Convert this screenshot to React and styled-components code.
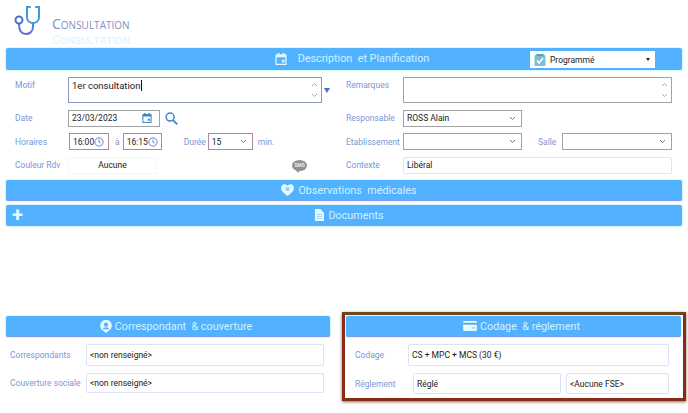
import React from "react";
import styled, { createGlobalStyle } from "styled-components";

const GlobalStyle = createGlobalStyle`
  html, body {
    margin: 0;
    padding: 0;
    background: #fff;
    font-family: Roboto, "Open Sans", sans-serif;
  }
`;

const Page = styled.div`
  width: 688px;
  height: 413px;
  overflow: hidden;
  box-sizing: border-box;
  padding: 0 6px;
  display: flex;
  flex-direction: column;
`;

const Header = styled.header`
  height: 48px;
  flex: none;
  display: flex;
  align-items: flex-start;
  gap: 10px;
  padding: 5px 0 0 8px;
  box-sizing: border-box;
`;

const TitleStack = styled.div`
  display: flex;
  flex-direction: column;
  padding-top: 9px;
`;

const Title = styled.h1`
  margin: 0;
  font-family: ${(p) => (p.$ghost ? "Roboto" : '"Open Sans"')}, sans-serif;
  font-size: ${(p) => (p.$ghost ? 12.3 : 14)}px;
  line-height: normal;
  font-weight: 400;
  font-variant: small-caps;
  color: ${(p) => (p.$ghost ? "#dff4ff" : "#7f8fc4")};
`;

const Bar = styled.div`
  position: relative;
  height: ${(p) => p.$h || 21}px;
  flex: none;
  box-sizing: border-box;
  padding-left: ${(p) => p.$pl ?? 16}px;
  background: #52b2ff;
  border-radius: 2px;
  border-bottom: 1px solid #7d9df2;
  box-shadow: 0 0 0 1px #d8f8ff;
  display: flex;
  align-items: center;
  justify-content: center;
  gap: ${(p) => p.$gap || 4}px;
  color: #cdf3ff;
  font-size: 10.8px;
  white-space: pre;
`;

const StatusSelect = styled.div`
  position: absolute;
  left: 524px;
  top: 3px;
  width: 125px;
  height: 17px;
  box-sizing: border-box;
  background: #fff;
  color: #222;
  font-size: 8.5px;
  display: flex;
  align-items: center;
  padding: 0 5px 0 4px;
  gap: 4px;
`;

const Caret = styled.span`
  margin-left: auto;
  border: 2px solid transparent;
  border-top: 3px solid #222;
  border-bottom: 0;
`;

const PlusIcon = styled.span`
  position: absolute;
  left: 6px;
  top: 0;
  font-size: 20px;
  line-height: 20px;
  font-weight: 700;
  color: #e6fbff;
`;

const FormGrid = styled.div`
  display: grid;
  grid-template-columns: 331px 1fr;
  grid-template-rows: 26px 17px 17px 17px;
  row-gap: 6.5px;
  padding: 7px 10px 0 9px;
  height: 110px;
  flex: none;
  box-sizing: border-box;
`;

const Row = styled.div`
  display: flex;
  align-items: ${(p) => (p.$top ? "flex-start" : "center")};
  min-width: 0;
`;

const Label = styled.label`
  width: ${(p) => p.$w || 53}px;
  flex: none;
  font-size: 8.5px;
  line-height: 12px;
  color: #7a98d4;
  margin-left: ${(p) => p.$ml || 0}px;
  padding-top: ${(p) => (p.$top ? 2 : 0)}px;
  white-space: nowrap;
`;

const Inline = styled.span`
  display: flex;
  font-size: 8.5px;
  color: #7a98d4;
  margin: 0 ${(p) => p.$mr ?? 6}px 0 ${(p) => p.$ml ?? 6}px;
`;

const Field = styled.div`
  box-sizing: border-box;
  width: ${(p) => (p.$w ? `${p.$w}px` : "auto")};
  flex: ${(p) => (p.$w ? "none" : 1)};
  height: 100%;
  margin-left: ${(p) => p.$ml || 0}px;
  background: #fff;
  border: 1px solid ${(p) => p.$border || "#a2a2a2"};
  color: #222;
  font-size: 8.5px;
  display: flex;
  align-items: center;
  padding: 0 3px;
  white-space: nowrap;
`;

const TextArea = styled(Field)`
  align-items: flex-start;
  padding: 2px 3px;
  font-size: 9.500px;
  line-height: 12px;
  position: relative;
`;

const Cursor = styled.span`
  border-left: 1px solid #111;
  height: 11px;
  margin-left: 1px;
`;

const Arrows = styled.span`
  position: absolute;
  right: 3px;
  top: 4px;
  bottom: 4px;
  display: flex;
  flex-direction: column;
  justify-content: space-between;
`;

const Chevron = ({ up, color = "#777" }) => (
  <svg width="7" height="5" viewBox="0 0 7 5" fill="none" stroke={color} strokeWidth="1">
    <path d={up ? "M1 4l2.500-2.500L6 4" : "M1 1l2.500 2.500L6 1"} />
  </svg>
);

const ChevronSlot = styled.span`
  margin-left: auto;
  display: flex;
  padding-right: ${(p) => p.$pr ?? 2}px;
`;

const SelectField = ({ w, border, ml, children }) => (
  <Field $w={w} $border={border} $ml={ml}>
    {children}
    <ChevronSlot>
      <Chevron />
    </ChevronSlot>
  </Field>
);

const ScrollArrows = () => (
  <Arrows>
    <Chevron up color="#aaa" />
    <Chevron color="#aaa" />
  </Arrows>
);

const MoreArrow = styled.span`
  margin-left: 2px;
  align-self: center;
  border: 3.500px solid transparent;
  border-top: 5px solid #4a6fc4;
  border-bottom: 0;
`;

const ColorBox = styled.div`
  width: 89px;
  height: 100%;
  box-sizing: border-box;
  border: 1px solid #f4f6fb;
  display: flex;
  align-items: center;
  justify-content: center;
  font-size: 8.5px;
  color: #222;
`;

const SmsBadge = styled.span`
  position: relative;
  margin-left: auto;
  margin-right: 39px;
  width: 15px;
  height: 11px;
  border-radius: 50%;
  background: #909090;
  color: #eee;
  font-size: 5px;
  font-weight: 700;
  display: flex;
  align-items: center;
  justify-content: center;
  &::after {
    content: "";
    position: absolute;
    left: 4px;
    bottom: -2px;
    border: 2px solid transparent;
    border-top: 3px solid #909090;
    border-bottom: 0;
  }
`;

const ContextField = styled(Field)`
  border-color: #dfe5f6;
  border-radius: 2px;
`;

const Bars = styled.div`
  display: flex;
  flex-direction: column;
  gap: 4px;
`;

const Bottom = styled.div`
  margin-top: auto;
  display: grid;
  grid-template-columns: 324px 1fr;
  column-gap: 12px;
  height: 97px;
  flex: none;
`;

const Panel = styled.section`
  display: flex;
  flex-direction: column;
  box-sizing: border-box;
  ${(p) =>
    p.$selected
      ? `
    height: 89px;
    margin: -4px -4px 0 0;
    padding: 1px 2px 0 1px;
    border: 3px solid #8a2a17;
    border-top-color: #6e4a1a;
    box-shadow: 0 1px 3px rgba(60, 50, 20, 0.7);
    overflow: hidden;
  `
      : "height: 80px;"}
`;

const PanelBody = styled.div`
  display: flex;
  flex-direction: column;
  gap: 7px;
  padding: ${(p) => (p.$selected ? "7px 12px 0 9px" : "7px 6px 0 4px")};
`;

const PanelRow = styled.div`
  display: flex;
  align-items: center;
  height: ${(p) => p.$h}px;
  flex: none;
  gap: ${(p) => p.$gap || 0}px;
`;

const RoundField = styled(Field)`
  border: 1px solid #dde3f6;
  border-radius: 2px;
  padding: 0 3px;
`;

const Stethoscope = () => (
  <svg width="28" height="31" viewBox="0 0 28 31" fill="none" strokeWidth="2" strokeLinecap="round">
    <defs>
      <linearGradient id="steth" x1="0" y1="0" x2="0" y2="1">
        <stop offset="0" stopColor="#3f96d8" />
        <stop offset="1" stopColor="#6a62d6" />
      </linearGradient>
    </defs>
    <path stroke="#3f9ad8" d="M16 2h-3v10c0 4 3 6 6 6s6-2 6-6V2h-3" />
    <path stroke="url(#steth)" d="M19 18v4c0 5-4 7-7 7-4 0-7-3-7-10" />
    <circle cx="5" cy="15" r="3.500" stroke="#4a6fd0" />
  </svg>
);

const CalendarIcon = ({ size = 12, color = "#dff8ff" }) => (
  <svg width={size} height={size} viewBox="0 0 14 14">
    <path
      fill={color}
      fillRule="evenodd"
      d="M3 0h2v1.500h4V0h2v1.500h1.500a1 1 0 0 1 1 1V13a1 1 0 0 1-1 1h-11a1 1 0 0 1-1-1V2.500a1 1 0 0 1 1-1H3zM2 5v7.500h10V5zM8 8h3v3H8z"
    />
  </svg>
);

const ClockIcon = () => (
  <svg width="10" height="10" viewBox="0 0 12 12" fill="none" stroke="#5a78d8" strokeWidth="1.100">
    <circle cx="6" cy="6" r="5" />
    <path d="M6 3v3.200l2 1" />
  </svg>
);

const SearchIcon = () => (
  <svg width="13" height="13" viewBox="0 0 14 14" fill="none" stroke="#3f86c8" strokeWidth="1.600">
    <circle cx="5.500" cy="5.500" r="4.300" />
    <path d="M8.700 8.700l4.500 4.600" strokeWidth="2" />
  </svg>
);

const StatusIcon = () => (
  <svg width="12" height="12" viewBox="0 0 11 12">
    <rect x="0" y="1" width="11" height="11" rx="1" fill="#7cc0d8" />
    <rect x="2" y="0" width="7" height="2" fill="#5a9fc0" />
    <path d="M2.500 6.500l2 2.500 4-5" fill="none" stroke="#fff" strokeWidth="1.500" />
  </svg>
);

const HeartIcon = () => (
  <svg width="13" height="12" viewBox="0 0 14 13">
    <path fill="#e6fbff" d="M7 13C3 10 0 7.500 0 4a3.800 3.800 0 0 1 7-2 3.800 3.800 0 0 1 7 2c0 3.500-3 6-7 9z" />
    <rect x="5" y="3.500" width="4" height="4" fill="#8fd0f8" />
  </svg>
);

const DocIcon = () => (
  <svg width="10" height="12" viewBox="0 0 11 13">
    <path fill="#e6fbff" d="M1 0h6l4 4v9H1z" />
    <path stroke="#8fc8f4" strokeWidth="0.800" d="M3 6h6M3 8h6M3 10h6" />
  </svg>
);

const PinIcon = () => (
  <svg width="12" height="13" viewBox="0 0 13 14">
    <path fill="#e6fbff" d="M6.500 14L2 10.500A6.300 6.300 0 1 1 11 10.500z" />
    <circle cx="6.500" cy="5" r="2.300" fill="#52b2ff" />
    <path fill="#52b2ff" d="M2.800 10a3.800 3 0 0 1 7.400 0z" />
  </svg>
);

const CardIcon = () => (
  <svg width="14" height="10" viewBox="0 0 15 11">
    <rect width="15" height="11" rx="1" fill="#e6fbff" />
    <rect y="2" width="15" height="2" fill="#5f9fd8" />
    <rect x="9" y="6.500" width="4" height="2" fill="#a8d8f4" />
  </svg>
);

export default function App() {
  return (
    <Page>
      <GlobalStyle />
      <Header>
        <Stethoscope />
        <TitleStack>
          <Title>Consultation</Title>
          <Title $ghost>Consultation</Title>
        </TitleStack>
      </Header>

      <Bar $h={22} $gap={11}>
        <CalendarIcon />
        <span>Description  et Planification</span>
        <StatusSelect>
          <StatusIcon />
          Programmé
          <Caret />
        </StatusSelect>
      </Bar>

      <FormGrid>
        <Row $top>
          <Label $top>Motif</Label>
          <TextArea $w={254} $border="#8c96c4">
            1er consultation
            <Cursor />
            <ScrollArrows />
          </TextArea>
          <MoreArrow />
        </Row>
        <Row $top>
          <Label $top $w={57}>Remarques</Label>
          <TextArea>
            <ScrollArrows />
          </TextArea>
        </Row>

        <Row>
          <Label>Date</Label>
          <Field $w={92}>
            23/03/2023
            <ChevronSlot $pr={4}>
              <CalendarIcon size={10} color="#3f86c8" />
            </ChevronSlot>
          </Field>
          <Inline $ml={5} $mr={0}>
            <SearchIcon />
          </Inline>
        </Row>
        <Row>
          <Label $w={57}>Responsable</Label>
          <SelectField w={119}>ROSS Alain</SelectField>
        </Row>

        <Row>
          <Label>Horaires</Label>
          <Field $w={40} $ml={1} $border="#b08a98">
            16:00
            <ChevronSlot $pr={1}>
              <ClockIcon />
            </ChevronSlot>
          </Field>
          <Inline $ml={6} $mr={3}>à</Inline>
          <Field $w={39} $border="#b08a98">
            16:15
            <ChevronSlot $pr={1}>
              <ClockIcon />
            </ChevronSlot>
          </Field>
          <Inline $ml={22} $mr={2}>Durée</Inline>
          <SelectField w={45} border="#b08a98">15</SelectField>
          <Inline $ml={5}>min.</Inline>
        </Row>
        <Row>
          <Label $w={57}>Etablissement</Label>
          <SelectField w={119} />
          <Label $ml={16} $w={24}>Salle</Label>
          <SelectField />
        </Row>

        <Row>
          <Label>Couleur Rdv</Label>
          <ColorBox>Aucune</ColorBox>
          <SmsBadge>SMS</SmsBadge>
        </Row>
        <Row>
          <Label $w={57}>Contexte</Label>
          <ContextField>Libéral</ContextField>
        </Row>
      </FormGrid>

      <Bars>
        <Bar $pl={10}>
          <HeartIcon />
          <span>Observations  médicales</span>
        </Bar>
        <Bar $pl={10}>
          <PlusIcon>+</PlusIcon>
          <DocIcon />
          <span>Documents</span>
        </Bar>
      </Bars>

      <Bottom>
        <Panel>
          <Bar $gap={3}>
            <PinIcon />
            <span>Correspondant  &amp; couverture</span>
          </Bar>
          <PanelBody>
            <PanelRow $h={22}>
              <Label $w={76}>Correspondants</Label>
              <RoundField>&lt;non renseigné&gt;</RoundField>
            </PanelRow>
            <PanelRow $h={20}>
              <Label $w={76}>Couverture sociale</Label>
              <RoundField>&lt;non renseigné&gt;</RoundField>
            </PanelRow>
          </PanelBody>
        </Panel>

        <Panel $selected>
          <Bar $gap={3}>
            <CardIcon />
            <span>Codage  &amp; réglement</span>
          </Bar>
          <PanelBody $selected>
            <PanelRow $h={22}>
              <Label>Codage</Label>
              <RoundField>CS + MPC + MCS (30 €)</RoundField>
            </PanelRow>
            <PanelRow $h={21} $gap={5}>
              <Label>Réglement</Label>
              <RoundField>Réglé</RoundField>
              <RoundField $w={103}>&lt;Aucune FSE&gt;</RoundField>
            </PanelRow>
          </PanelBody>
        </Panel>
      </Bottom>
    </Page>
  );
}
